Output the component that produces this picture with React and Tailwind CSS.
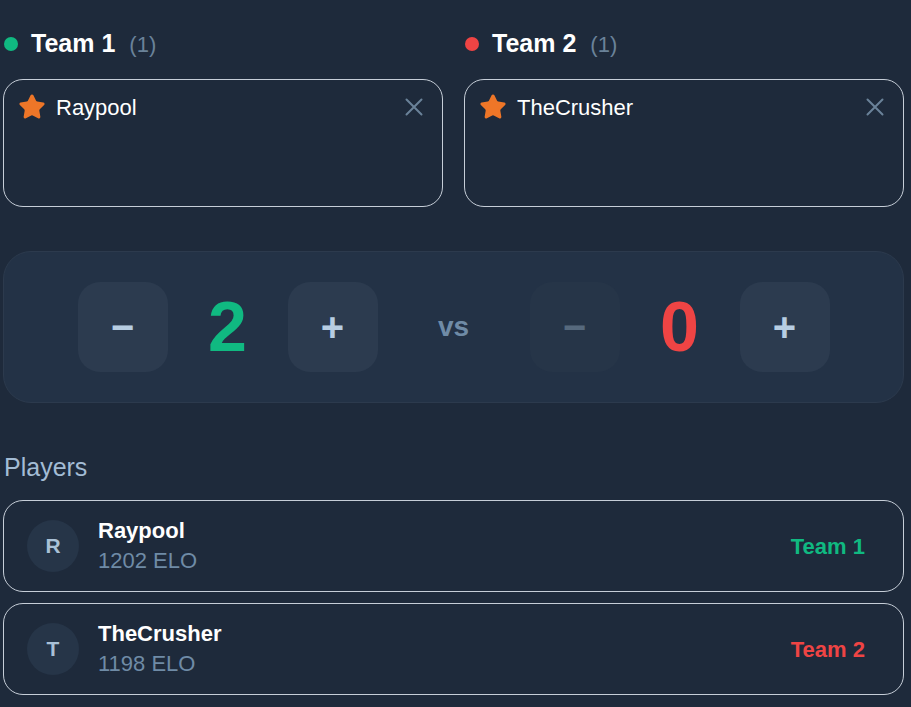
import React, { useState } from 'react';

const font = { fontFamily: '"Liberation Sans", Arial, sans-serif' };

const StarIcon = () => (
  <svg width="28" height="28" viewBox="0 0 24 24" fill="#ee7628" stroke="#ee7628" strokeWidth="1.6" strokeLinejoin="round">
    <path d="M11.525 2.295a.53.53 0 0 1 .95 0l2.31 4.679a2.123 2.123 0 0 0 1.595 1.16l5.166.756a.53.53 0 0 1 .294.904l-3.736 3.638a2.123 2.123 0 0 0-.611 1.878l.882 5.14a.53.53 0 0 1-.771.56l-4.618-2.428a2.122 2.122 0 0 0-1.973 0L6.396 21.01a.53.53 0 0 1-.77-.56l.881-5.139a2.122 2.122 0 0 0-.611-1.879L2.16 9.795a.53.53 0 0 1 .294-.906l5.165-.755a2.122 2.122 0 0 0 1.597-1.16z" />
  </svg>
);

const CloseIcon = () => (
  <svg width="18" height="18" viewBox="0 0 18 18" fill="none" stroke="#6a8299" strokeWidth="2" strokeLinecap="round">
    <path d="M1.5 1.5l15 15M16.5 1.5l-15 15" />
  </svg>
);

const TeamColumn = ({ name, dot, players }) => (
  <div className="flex-1 min-w-0">
    <div className="flex items-center h-8 pl-[1px]">
      <span className={`w-[14px] h-[14px] rounded-full ${dot}`} />
      <span className="ml-[13px] text-[25px] font-bold text-white">{name}</span>
      <span className="ml-[14px] text-[22px] text-[#6a8299]">({players.length})</span>
    </div>
    <div className="mt-[19px] h-[128px] rounded-[20px] border border-[#c6ced8] pl-[14px] pr-[19px] pt-[13px]">
      {players.map((p) => (
        <div key={p} className="flex items-center h-7">
          <StarIcon />
          <span className="ml-[10px] text-[22px] text-white">{p}</span>
          <button className="ml-auto">
            <CloseIcon />
          </button>
        </div>
      ))}
    </div>
  </div>
);

const ScoreButton = ({ children, disabled, onClick }) => (
  <button
    onClick={onClick}
    className={`w-[90px] h-[90px] rounded-[22px] flex items-center justify-center text-[40px] font-bold ${
      disabled ? 'bg-[#263548] text-[#56697d]' : 'bg-[#2c3b4f] text-[#b7cde2]'
    }`}
  >
    {children}
  </button>
);

const ScoreGroup = ({ score, setScore, color }) => (
  <div className="flex items-center gap-5">
    <ScoreButton disabled={score === 0} onClick={() => setScore(Math.max(0, score - 1))}>
      −
    </ScoreButton>
    <div className={`w-20 text-center text-[70px] font-bold leading-none ${color}`}>{score}</div>
    <ScoreButton onClick={() => setScore(score + 1)}>+</ScoreButton>
  </div>
);

const PlayerRow = ({ name, elo, team, teamColor }) => (
  <div className="flex items-center h-[92px] rounded-[20px] border border-[#c6ced8] pl-[23px] pr-[38px]">
    <div className="w-[52px] h-[52px] rounded-full bg-[#263548] flex items-center justify-center text-[21px] font-bold text-[#a9c0d6]">
      {name[0]}
    </div>
    <div className="ml-[19px] flex flex-col">
      <span className="text-[22px] leading-[30px] font-bold text-white">{name}</span>
      <span className="text-[22px] leading-[30px] text-[#6f8ba6]">{elo} ELO</span>
    </div>
    <span className={`ml-auto text-[22px] font-bold ${teamColor}`}>{team}</span>
  </div>
);

export default function App() {
  const [score1, setScore1] = useState(2);
  const [score2, setScore2] = useState(0);

  return (
    <div className="min-h-screen bg-[#1e2a3b]" style={font}>
      <div className="w-[901px] ml-[3px] pt-[28px] pb-6">
        {/* Teams */}
        <div className="flex gap-[21px]">
          <TeamColumn name="Team 1" dot="bg-[#10b981]" players={['Raypool']} />
          <TeamColumn name="Team 2" dot="bg-[#ef4444]" players={['TheCrusher']} />
        </div>

        {/* Score */}
        <div className="mt-[44px] rounded-[28px] border border-[#2c3a4d] bg-[#233246] py-[30px] flex items-center justify-center">
          <ScoreGroup score={score1} setScore={setScore1} color="text-[#10b981]" />
          <div className="w-[152px] text-center text-[28px] font-bold text-[#6f8ba6]">vs</div>
          <ScoreGroup score={score2} setScore={setScore2} color="text-[#ef4444]" />
        </div>

        {/* Players */}
        <div className="mt-[48px] pl-[1px] text-[25px] leading-8 text-[#a3bcd5]">Players</div>
        <div className="mt-[17px] flex flex-col gap-[11px]">
          <PlayerRow name="Raypool" elo={1202} team="Team 1" teamColor="text-[#10b981]" />
          <PlayerRow name="TheCrusher" elo={1198} team="Team 2" teamColor="text-[#ef4444]" />
        </div>
      </div>
    </div>
  );
}
